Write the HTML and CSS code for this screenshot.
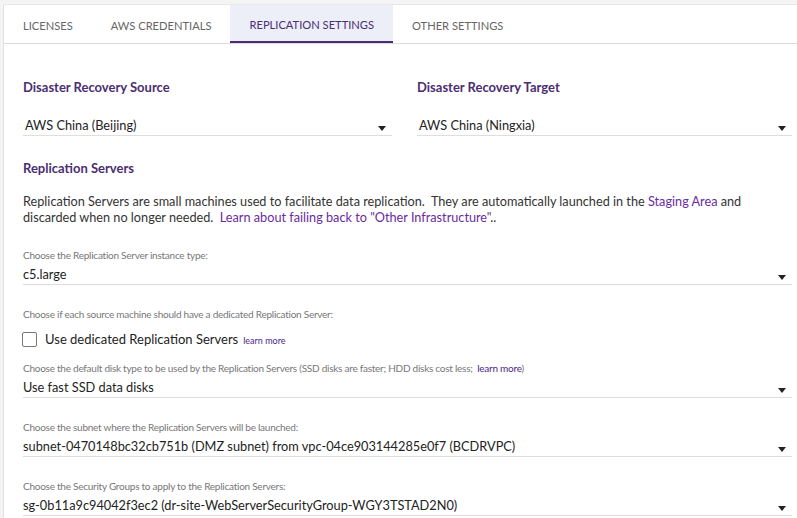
FILE: index.html
```html
<!DOCTYPE html>
<html>
<head>
<meta charset="utf-8">
<link rel="stylesheet" href="styles.css">
</head>
<body>
<div class="card">
  <div class="tabs">
    <div class="tab">Licenses</div>
    <div class="tab">AWS Credentials</div>
    <div class="tab active">Replication Settings</div>
    <div class="tab">Other Settings</div>
  </div>
  <div class="content">
    <div class="cols">
      <div class="col">
        <div class="heading">Disaster Recovery Source</div>
        <div class="select region"><span>AWS China (Beijing)</span><i class="arrow"></i></div>
      </div>
      <div class="col">
        <div class="heading">Disaster Recovery Target</div>
        <div class="select region"><span>AWS China (Ningxia)</span><i class="arrow"></i></div>
      </div>
    </div>
    <div class="heading section">Replication Servers</div>
    <p class="desc">Replication Servers are small machines used to facilitate data replication.&nbsp; They are automatically launched in the <a>Staging Area</a> and discarded when no longer needed.&nbsp;&nbsp;<a>Learn about failing back to "Other Infrastructure"</a>..</p>

    <div class="field first">
      <div class="label">Choose the Replication Server instance type:</div>
      <div class="select"><span>c5.large</span><i class="arrow"></i></div>
    </div>

    <div class="field">
      <div class="label">Choose if each source machine should have a dedicated Replication Server:</div>
      <div class="check-row"><span class="box"></span><span class="check-label">Use dedicated Replication Servers</span><a class="small-link">learn more</a></div>
    </div>

    <div class="field after-check">
      <div class="label">Choose the default disk type to be used by the Replication Servers (SSD disks are faster; HDD disks cost less;&nbsp; <a class="label-link">learn more</a>)</div>
      <div class="select"><span>Use fast SSD data disks</span><i class="arrow"></i></div>
    </div>

    <div class="field">
      <div class="label">Choose the subnet where the Replication Servers will be launched:</div>
      <div class="select"><span>subnet-0470148bc32cb751b (DMZ subnet) from vpc-04ce903144285e0f7 (BCDRVPC)</span><i class="arrow"></i></div>
    </div>

    <div class="field">
      <div class="label">Choose the Security Groups to apply to the Replication Servers:</div>
      <div class="select"><span>sg-0b11a9c94042f3ec2 (dr-site-WebServerSecurityGroup-WGY3TSTAD2N0)</span><i class="arrow"></i></div>
    </div>
  </div>
</div>
</body>
</html>
```
FILE: styles.css
```css
html, body {
  margin: 0;
  padding: 0;
  background: #f4f4f4;
  font-family: Lato, "Open Sans", sans-serif;
}
body {
  height: 518px;
  overflow: hidden;
}
.card {
  margin: 4px 0 0 3px;
  background: #fff;
  border-left: 1px solid #e2e2e2;
  border-top: 1px solid #e8e8e8;
  height: 513px;
  overflow: hidden;
}
.tabs {
  display: flex;
  height: 38px;
  border-bottom: 1px solid #dcdcdc;
}
.tab {
  padding: 3px 19px 0;
  font-size: 11.15px;
  text-transform: uppercase;
  color: #666;
  line-height: 35px;
  box-sizing: border-box;
  height: 38px;
}
.tab.active {
  background: #eceef8;
  color: #4a2f73;
  border-bottom: 2px solid #4b2a7a;
  line-height: 33px;
}
.content {
  padding: 35px 5px 0 19px;
}
.cols {
  display: grid;
  grid-template-columns: 369px 1fr;
  column-gap: 25px;
}
.heading {
  font-size: 13px;
  font-weight: 700;
  color: #4b2e72;
  line-height: 16px;
}
.heading.section {
  margin-top: 24px;
}
.select {
  display: flex;
  align-items: center;
  height: 20px;
  border-bottom: 1px solid #dedede;
  font-size: 12.75px;
  color: #222;
  margin-top: 2px;
}
.select.region {
  margin-top: 20px;
  padding-left: 2px;
}
.select span {
  flex: 1;
  line-height: 20px;
  white-space: nowrap;
}
.arrow {
  width: 0;
  height: 0;
  border-left: 4.5px solid transparent;
  border-right: 4.5px solid transparent;
  border-top: 5px solid #222;
  margin: 6px 6px 0 0;
}
.desc {
  margin: 17px 0 0 0;
  font-size: 12.7px;
  line-height: 16px;
  color: #333;
}
a {
  color: #6a2ba0;
  text-decoration: none;
}
.field {
  margin-top: 22px;
}
.field.first {
  margin-top: 23px;
}
.field.after-check {
  margin-top: 7px;
}
.label {
  font-size: 10px;
  line-height: 14px;
  color: #777;
  letter-spacing: -0.25px;
}
.label-link {
  color: #4b1f8a;
}
.check-row {
  display: flex;
  align-items: center;
  height: 30px;
  margin-top: 3px;
}
.box {
  width: 13px;
  height: 13px;
  border: 1px solid #777;
  border-radius: 2px;
  margin-right: 8px;
  margin-left: -1px;
  flex-shrink: 0;
}
.check-label {
  font-size: 13px;
  color: #222;
  margin-right: 5px;
}
.small-link {
  font-size: 9px;
  color: #4b1f8a;
  margin-top: 3px;
}
```
